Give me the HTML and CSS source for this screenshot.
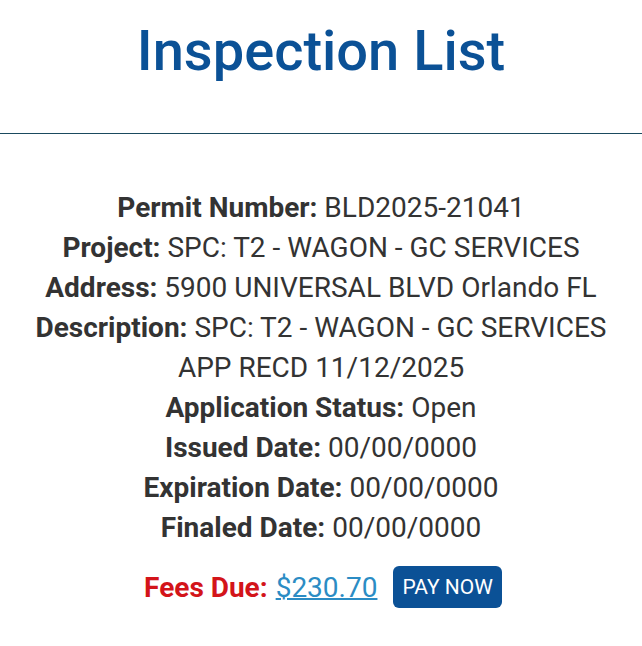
FILE: index.html
```html
<!DOCTYPE html>
<html>
<head>
<meta charset="utf-8">
<link rel="stylesheet" href="styles.css">
</head>
<body>
<header class="page-header">
  <h1 class="title">Inspection List</h1>
</header>
<section class="details">
  <p class="row"><b>Permit Number:</b> BLD2025-21041</p>
  <p class="row"><b>Project:</b> SPC: T2 - WAGON - GC SERVICES</p>
  <p class="row"><b>Address:</b> 5900 UNIVERSAL BLVD Orlando FL</p>
  <p class="row"><b>Description:</b> SPC: T2 - WAGON - GC SERVICES APP RECD 11/12/2025</p>
  <p class="row"><b>Application Status:</b> Open</p>
  <p class="row"><b>Issued Date:</b> 00/00/0000</p>
  <p class="row"><b>Expiration Date:</b> 00/00/0000</p>
  <p class="row"><b>Finaled Date:</b> 00/00/0000</p>
  <div class="fees">
    <span class="fees-label">Fees Due:</span>
    <a class="fees-amount" href="#">$230.70</a>
    <button class="pay">PAY NOW</button>
  </div>
</section>
</body>
</html>
```
FILE: styles.css
```css
html, body {
  margin: 0;
  padding: 0;
  background: #fff;
  font-family: Roboto, "Liberation Sans", sans-serif;
  color: #333;
}
.page-header {
  border-bottom: 1px solid #1a4a5e;
  padding: 16px 0 47px;
  text-align: center;
}
.title {
  margin: 0;
  font-size: 56px;
  font-weight: 500;
  color: #0b5196;
  line-height: 70px;
}
.details {
  padding: 54px 20px 0;
  text-align: center;
}
.row {
  margin: 0;
  font-size: 28px;
  line-height: 40px;
}
.row b {
  font-weight: 700;
}
.fees {
  margin: 18px 0 0 4px;
  display: flex;
  justify-content: center;
  align-items: center;
  gap: 8px;
  font-size: 28px;
}
.fees-label {
  color: #d3141a;
  font-weight: 700;
}
.fees-amount {
  color: #2b8cc4;
  text-decoration: underline;
  text-decoration-thickness: 2px;
  margin-right: 8px;
}
.pay {
  background: #0b5196;
  color: #fff;
  border: none;
  border-radius: 6px;
  font-family: Roboto, "Liberation Sans", sans-serif;
  font-size: 21px;
  padding: 0 9px;
  height: 42px;
}
```
